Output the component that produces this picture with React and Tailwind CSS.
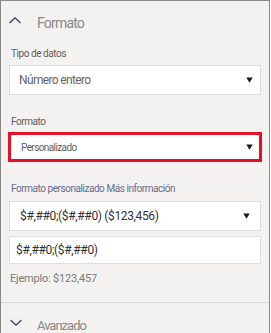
const Caret = () => (
  <svg width="7" height="6" viewBox="0 0 7 6">
    <polygon points="0.3,0.5 6.7,0.5 3.5,5.7" fill="#1b1a19" />
  </svg>
);

export default function App() {
  return (
    <div className="w-[271px] h-[333px] overflow-hidden bg-white" style={{ fontFamily: 'Roboto, "Liberation Sans", sans-serif' }}>
      <div className="w-[270px] h-[333px] bg-[#f3f2f1] border-l border-t border-r border-[#8a8886] flex flex-col">
        {/* header */}
        <div className="flex items-center h-[44px] pl-[8px] shrink-0">
          <svg width="12" height="7" viewBox="0 0 12 7" className="mb-[6px]">
            <polyline points="0.5,6 6,0.8 11.5,6" fill="none" stroke="#2f2f5e" strokeWidth="1.1" />
          </svg>
          <span className="ml-[16px] text-[14px] tracking-[-0.8px] text-[#8a8886]">Formato</span>
        </div>

        <div className="px-[8px] flex flex-col shrink-0">
          <div className="h-[18px] leading-[18px] text-[10px] tracking-[-0.45px] text-[#605e5c] pl-[2px]">Tipo de datos</div>
          <div className="mt-[2px] h-[30px] bg-white border border-[#e1dfdd] flex items-center justify-between pl-[9px] pr-[7px]">
            <span className="text-[12px] tracking-[-0.65px] text-[#666666]">Número entero</span>
            <Caret />
          </div>

          <div className="mt-[18px] h-[18px] leading-[18px] text-[10px] tracking-[-0.45px] text-[#605e5c] pl-[2px]">Formato</div>
          <div className="mt-[1px] -mx-[1px] h-[30px] bg-white border-[3px] border-[#e81123] flex items-center justify-between pl-[10px] pr-[6px]">
            <span className="text-[10px] tracking-[-0.6px] text-[#605e5c]">Personalizado</span>
            <Caret />
          </div>

          <div className="mt-[18px] h-[18px] leading-[18px] text-[10px] tracking-[-0.45px] text-[#6b6a8a] pl-[2px]">Formato personalizado Más información</div>
          <div className="mt-[3px] h-[30px] bg-white border border-[#e1dfdd] flex items-center justify-between pl-[10px] pr-[10px]">
            <span className="text-[12px] tracking-[-0.35px] text-[#323130]">$#,##0;($#,##0) ($123,456)</span>
            <Caret />
          </div>
          <div className="mt-[5px] h-[28px] bg-white border border-[#e1dfdd] flex items-center pl-[6px]">
            <span className="text-[12px] tracking-[-0.35px] text-[#323130]">$#,##0;($#,##0)</span>
          </div>
          <div className="mt-[6px] h-[18px] leading-[18px] text-[11px] tracking-[-0.2px] text-[#7a7a7a] pl-[1px]">Ejemplo: $123,457</div>
        </div>

        <div className="mt-[14px] border-t border-[#dcdad8] shrink-0" />
        <div className="flex items-center h-[45px] pl-[9px] shrink-0">
          <svg width="12" height="7" viewBox="0 0 12 7" className="mb-[6px]">
            <polyline points="0.5,1 6,6.2 11.5,1" fill="none" stroke="#2f2f5e" strokeWidth="1.1" />
          </svg>
          <span className="ml-[15px] text-[13px] tracking-[-1px] text-[#8a8886]">Avanzado</span>
        </div>
      </div>
    </div>
  );
}
